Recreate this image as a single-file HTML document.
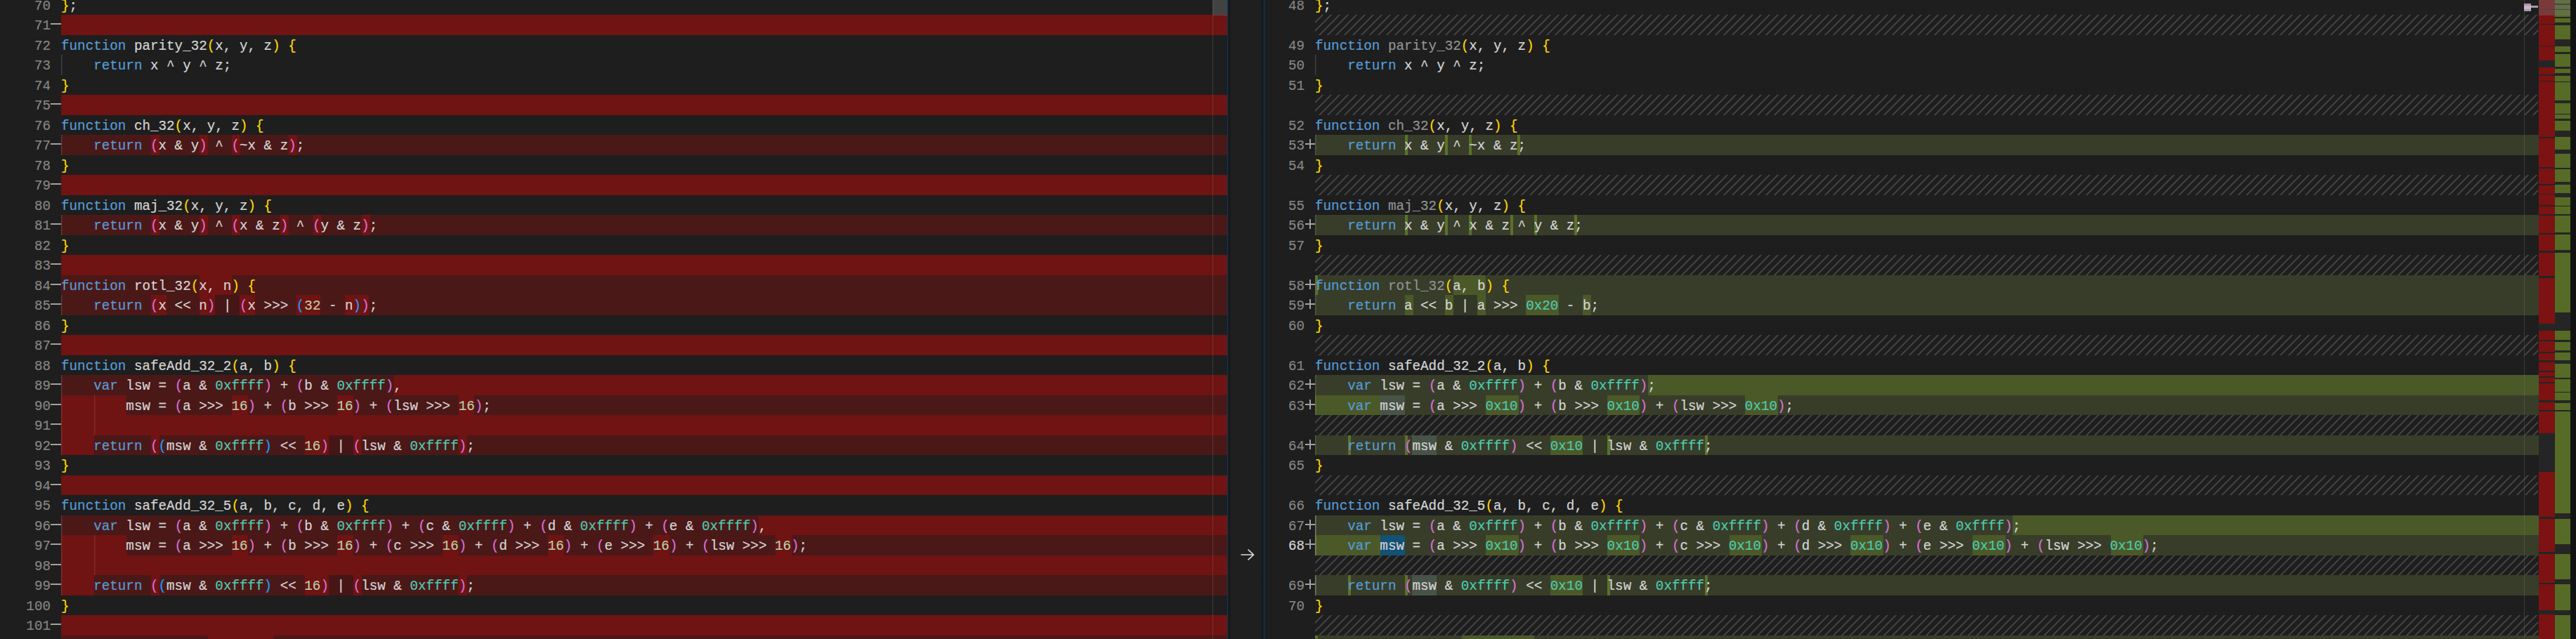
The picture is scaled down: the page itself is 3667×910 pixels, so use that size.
<!DOCTYPE html>
<html><head><meta charset="utf-8"><title>diff</title>
<style>
html,body{margin:0;padding:0;background:#1e1e1e;}
body{width:3667px;height:910px;overflow:hidden;position:relative;font-family:"Liberation Mono",monospace;}
div{position:absolute;box-sizing:border-box;}
.t,.ln{font-family:"Liberation Mono",monospace;font-size:19.245px;line-height:28.5px;height:28.5px;white-space:pre;color:#d4d4d4;-webkit-text-stroke:0.2px currentColor;transform:scaleY(1.05);transform-origin:0 21.3px;}
.ln{color:#858585;text-align:right;}
.ln.act{color:#d4d4d4;}
.k{color:#569cd6}.h{color:#4ec9b0}.n{color:#b5cea8}.b1{color:#ffd700}.b2{color:#da70d6}.b3{color:#179fff}.d{color:#929292}
.ga{background:#707070}.ga2{background:rgba(112,112,112,.45)}.g{background:#404040}.g2{background:rgba(64,64,64,.45)}
.dl{background:rgba(255,0,0,.2)}.dc{background:rgba(255,0,0,.2)}.dk{background:rgba(0,0,0,.06)}
.il{background:rgba(155,185,85,.2)}.ic{background:rgba(156,204,44,.2)}.ik{background:rgba(0,0,0,.08)}
.ib{background:#5b712a}
.wh{background:rgba(173,214,255,.15)}.sel{background:#125275;border-radius:3px}
.mi{background:#a2a2a2}
.hz{background-image:linear-gradient(-45deg,rgba(204,204,204,.2) 12.5%,transparent 12.5%,transparent 50%,rgba(204,204,204,.2) 50%,rgba(204,204,204,.2) 62.5%,transparent 62.5%,transparent 100%);background-size:12px 12px;}
.ovbg{background:#252525}.ovr{background:#7d1212}.ovg{background:#566b25}.ovs{background:rgba(121,121,121,.4)}.ove{background:#121212}
</style></head><body>
<div class="ln" style="left:0;top:-5px;width:72px">70</div>
<div class="t" style="left:87px;top:-5px"><span class="b1">}</span>;</div>
<div class="dl" style="left:87px;top:21px;width:1660px;height:29px"></div>
<div class="dc" style="left:87px;top:21px;width:1660px;height:29px"></div>
<div class="mi" style="left:72px;top:33px;width:15px;height:2px"></div>
<div class="ln" style="left:0;top:23px;width:72px">71</div>
<div class="ln" style="left:0;top:52px;width:72px">72</div>
<div class="t" style="left:87px;top:52px"><span class="k">function</span> parity_32<span class="b1">(</span>x, y, z<span class="b1">)</span> <span class="b1">{</span></div>
<div class="g" style="left:87px;top:78px;width:1px;height:29px"></div>
<div class="g2" style="left:88px;top:78px;width:1px;height:29px"></div>
<div class="ln" style="left:0;top:80px;width:72px">73</div>
<div class="t" style="left:87px;top:80px">    <span class="k">return</span> x ^ y ^ z;</div>
<div class="ln" style="left:0;top:109px;width:72px">74</div>
<div class="t" style="left:87px;top:109px"><span class="b1">}</span></div>
<div class="dl" style="left:87px;top:135px;width:1660px;height:29px"></div>
<div class="dc" style="left:87px;top:135px;width:1660px;height:29px"></div>
<div class="mi" style="left:72px;top:147px;width:15px;height:2px"></div>
<div class="ln" style="left:0;top:137px;width:72px">75</div>
<div class="ln" style="left:0;top:166px;width:72px">76</div>
<div class="t" style="left:87px;top:166px"><span class="k">function</span> ch_32<span class="b1">(</span>x, y, z<span class="b1">)</span> <span class="b1">{</span></div>
<div class="g" style="left:87px;top:192px;width:1px;height:29px"></div>
<div class="g2" style="left:88px;top:192px;width:1px;height:29px"></div>
<div class="dl" style="left:87px;top:192px;width:1660px;height:29px"></div>
<div class="dc" style="left:215px;top:192px;width:12px;height:29px"></div>
<div class="dc" style="left:284px;top:192px;width:12px;height:29px"></div>
<div class="dc" style="left:330px;top:192px;width:12px;height:29px"></div>
<div class="dc" style="left:411px;top:192px;width:12px;height:29px"></div>
<div class="mi" style="left:72px;top:204px;width:15px;height:2px"></div>
<div class="ln" style="left:0;top:194px;width:72px">77</div>
<div class="t" style="left:87px;top:194px">    <span class="k">return</span> <span class="b2">(</span>x &amp; y<span class="b2">)</span> ^ <span class="b2">(</span>~x &amp; z<span class="b2">)</span>;</div>
<div class="ln" style="left:0;top:223px;width:72px">78</div>
<div class="t" style="left:87px;top:223px"><span class="b1">}</span></div>
<div class="dl" style="left:87px;top:249px;width:1660px;height:29px"></div>
<div class="dc" style="left:87px;top:249px;width:1660px;height:29px"></div>
<div class="mi" style="left:72px;top:261px;width:15px;height:2px"></div>
<div class="ln" style="left:0;top:251px;width:72px">79</div>
<div class="ln" style="left:0;top:280px;width:72px">80</div>
<div class="t" style="left:87px;top:280px"><span class="k">function</span> maj_32<span class="b1">(</span>x, y, z<span class="b1">)</span> <span class="b1">{</span></div>
<div class="g" style="left:87px;top:306px;width:1px;height:29px"></div>
<div class="g2" style="left:88px;top:306px;width:1px;height:29px"></div>
<div class="dl" style="left:87px;top:306px;width:1660px;height:29px"></div>
<div class="dc" style="left:215px;top:306px;width:12px;height:29px"></div>
<div class="dc" style="left:284px;top:306px;width:12px;height:29px"></div>
<div class="dc" style="left:330px;top:306px;width:12px;height:29px"></div>
<div class="dc" style="left:399px;top:306px;width:12px;height:29px"></div>
<div class="dc" style="left:446px;top:306px;width:12px;height:29px"></div>
<div class="dc" style="left:515px;top:306px;width:12px;height:29px"></div>
<div class="mi" style="left:72px;top:318px;width:15px;height:2px"></div>
<div class="ln" style="left:0;top:308px;width:72px">81</div>
<div class="t" style="left:87px;top:308px">    <span class="k">return</span> <span class="b2">(</span>x &amp; y<span class="b2">)</span> ^ <span class="b2">(</span>x &amp; z<span class="b2">)</span> ^ <span class="b2">(</span>y &amp; z<span class="b2">)</span>;</div>
<div class="ln" style="left:0;top:337px;width:72px">82</div>
<div class="t" style="left:87px;top:337px"><span class="b1">}</span></div>
<div class="dl" style="left:87px;top:363px;width:1660px;height:29px"></div>
<div class="dc" style="left:87px;top:363px;width:1660px;height:29px"></div>
<div class="mi" style="left:72px;top:375px;width:15px;height:2px"></div>
<div class="ln" style="left:0;top:365px;width:72px">83</div>
<div class="dl" style="left:87px;top:392px;width:1660px;height:28px"></div>
<div class="dc" style="left:284px;top:392px;width:46px;height:28px"></div>
<div class="mi" style="left:72px;top:404px;width:15px;height:2px"></div>
<div class="ln" style="left:0;top:394px;width:72px">84</div>
<div class="t" style="left:87px;top:394px"><span class="k">function</span> rotl_32<span class="b1">(</span>x, n<span class="b1">)</span> <span class="b1">{</span></div>
<div class="g" style="left:87px;top:420px;width:1px;height:29px"></div>
<div class="g2" style="left:88px;top:420px;width:1px;height:29px"></div>
<div class="dl" style="left:87px;top:420px;width:1660px;height:29px"></div>
<div class="dc" style="left:215px;top:420px;width:22px;height:29px"></div>
<div class="dc" style="left:284px;top:420px;width:22px;height:29px"></div>
<div class="dc" style="left:341px;top:420px;width:22px;height:29px"></div>
<div class="dc" style="left:422px;top:420px;width:34px;height:29px"></div>
<div class="dc" style="left:491px;top:420px;width:34px;height:29px"></div>
<div class="dk" style="left:306px;top:420px;width:35px;height:29px"></div>
<div class="mi" style="left:72px;top:432px;width:15px;height:2px"></div>
<div class="ln" style="left:0;top:422px;width:72px">85</div>
<div class="t" style="left:87px;top:422px">    <span class="k">return</span> <span class="b2">(</span>x &lt;&lt; n<span class="b2">)</span> | <span class="b2">(</span>x &gt;&gt;&gt; <span class="b3">(</span><span class="n">32</span> - n<span class="b3">)</span><span class="b2">)</span>;</div>
<div class="ln" style="left:0;top:451px;width:72px">86</div>
<div class="t" style="left:87px;top:451px"><span class="b1">}</span></div>
<div class="dl" style="left:87px;top:477px;width:1660px;height:29px"></div>
<div class="dc" style="left:87px;top:477px;width:1660px;height:29px"></div>
<div class="mi" style="left:72px;top:489px;width:15px;height:2px"></div>
<div class="ln" style="left:0;top:479px;width:72px">87</div>
<div class="ln" style="left:0;top:508px;width:72px">88</div>
<div class="t" style="left:87px;top:508px"><span class="k">function</span> safeAdd_32_2<span class="b1">(</span>a, b<span class="b1">)</span> <span class="b1">{</span></div>
<div class="g" style="left:87px;top:534px;width:1px;height:29px"></div>
<div class="g2" style="left:88px;top:534px;width:1px;height:29px"></div>
<div class="dl" style="left:87px;top:534px;width:1660px;height:29px"></div>
<div class="dc" style="left:561px;top:534px;width:1186px;height:29px"></div>
<div class="mi" style="left:72px;top:546px;width:15px;height:2px"></div>
<div class="ln" style="left:0;top:536px;width:72px">89</div>
<div class="t" style="left:87px;top:536px">    <span class="k">var</span> lsw = <span class="b2">(</span>a &amp; <span class="h">0xffff</span><span class="b2">)</span> + <span class="b2">(</span>b &amp; <span class="h">0xffff</span><span class="b2">)</span>,</div>
<div class="g" style="left:87px;top:563px;width:1px;height:28px"></div>
<div class="g2" style="left:88px;top:563px;width:1px;height:28px"></div>
<div class="g" style="left:134px;top:563px;width:1px;height:28px"></div>
<div class="g2" style="left:135px;top:563px;width:1px;height:28px"></div>
<div class="dl" style="left:87px;top:563px;width:1660px;height:28px"></div>
<div class="dc" style="left:87px;top:563px;width:93px;height:28px"></div>
<div class="dc" style="left:330px;top:563px;width:23px;height:28px"></div>
<div class="dc" style="left:480px;top:563px;width:23px;height:28px"></div>
<div class="dc" style="left:653px;top:563px;width:22px;height:28px"></div>
<div class="mi" style="left:72px;top:575px;width:15px;height:2px"></div>
<div class="ln" style="left:0;top:565px;width:72px">90</div>
<div class="t" style="left:87px;top:565px">        msw = <span class="b2">(</span>a &gt;&gt;&gt; <span class="n">16</span><span class="b2">)</span> + <span class="b2">(</span>b &gt;&gt;&gt; <span class="n">16</span><span class="b2">)</span> + <span class="b2">(</span>lsw &gt;&gt;&gt; <span class="n">16</span><span class="b2">)</span>;</div>
<div class="g" style="left:87px;top:591px;width:1px;height:29px"></div>
<div class="g2" style="left:88px;top:591px;width:1px;height:29px"></div>
<div class="g" style="left:134px;top:591px;width:1px;height:29px"></div>
<div class="g2" style="left:135px;top:591px;width:1px;height:29px"></div>
<div class="dl" style="left:87px;top:591px;width:1660px;height:29px"></div>
<div class="dc" style="left:87px;top:591px;width:1660px;height:29px"></div>
<div class="mi" style="left:72px;top:603px;width:15px;height:2px"></div>
<div class="ln" style="left:0;top:593px;width:72px">91</div>
<div class="g" style="left:87px;top:620px;width:1px;height:28px"></div>
<div class="g2" style="left:88px;top:620px;width:1px;height:28px"></div>
<div class="dl" style="left:87px;top:620px;width:1660px;height:28px"></div>
<div class="dc" style="left:87px;top:620px;width:47px;height:28px"></div>
<div class="dc" style="left:215px;top:620px;width:12px;height:28px"></div>
<div class="dc" style="left:434px;top:620px;width:34px;height:28px"></div>
<div class="dc" style="left:503px;top:620px;width:12px;height:28px"></div>
<div class="dc" style="left:653px;top:620px;width:12px;height:28px"></div>
<div class="dk" style="left:468px;top:620px;width:35px;height:28px"></div>
<div class="mi" style="left:72px;top:632px;width:15px;height:2px"></div>
<div class="ln" style="left:0;top:622px;width:72px">92</div>
<div class="t" style="left:87px;top:622px">    <span class="k">return</span> <span class="b2">(</span><span class="b3">(</span>msw &amp; <span class="h">0xffff</span><span class="b3">)</span> &lt;&lt; <span class="n">16</span><span class="b2">)</span> | <span class="b2">(</span>lsw &amp; <span class="h">0xffff</span><span class="b2">)</span>;</div>
<div class="ln" style="left:0;top:650px;width:72px">93</div>
<div class="t" style="left:87px;top:650px"><span class="b1">}</span></div>
<div class="dl" style="left:87px;top:677px;width:1660px;height:28px"></div>
<div class="dc" style="left:87px;top:677px;width:1660px;height:28px"></div>
<div class="mi" style="left:72px;top:689px;width:15px;height:2px"></div>
<div class="ln" style="left:0;top:679px;width:72px">94</div>
<div class="ln" style="left:0;top:707px;width:72px">95</div>
<div class="t" style="left:87px;top:707px"><span class="k">function</span> safeAdd_32_5<span class="b1">(</span>a, b, c, d, e<span class="b1">)</span> <span class="b1">{</span></div>
<div class="g" style="left:87px;top:734px;width:1px;height:28px"></div>
<div class="g2" style="left:88px;top:734px;width:1px;height:28px"></div>
<div class="dl" style="left:87px;top:734px;width:1660px;height:28px"></div>
<div class="dc" style="left:1080px;top:734px;width:667px;height:28px"></div>
<div class="mi" style="left:72px;top:746px;width:15px;height:2px"></div>
<div class="ln" style="left:0;top:736px;width:72px">96</div>
<div class="t" style="left:87px;top:736px">    <span class="k">var</span> lsw = <span class="b2">(</span>a &amp; <span class="h">0xffff</span><span class="b2">)</span> + <span class="b2">(</span>b &amp; <span class="h">0xffff</span><span class="b2">)</span> + <span class="b2">(</span>c &amp; <span class="h">0xffff</span><span class="b2">)</span> + <span class="b2">(</span>d &amp; <span class="h">0xffff</span><span class="b2">)</span> + <span class="b2">(</span>e &amp; <span class="h">0xffff</span><span class="b2">)</span>,</div>
<div class="g" style="left:87px;top:762px;width:1px;height:29px"></div>
<div class="g2" style="left:88px;top:762px;width:1px;height:29px"></div>
<div class="g" style="left:134px;top:762px;width:1px;height:29px"></div>
<div class="g2" style="left:135px;top:762px;width:1px;height:29px"></div>
<div class="dl" style="left:87px;top:762px;width:1660px;height:29px"></div>
<div class="dc" style="left:87px;top:762px;width:93px;height:29px"></div>
<div class="dc" style="left:330px;top:762px;width:23px;height:29px"></div>
<div class="dc" style="left:480px;top:762px;width:23px;height:29px"></div>
<div class="dc" style="left:630px;top:762px;width:23px;height:29px"></div>
<div class="dc" style="left:780px;top:762px;width:23px;height:29px"></div>
<div class="dc" style="left:930px;top:762px;width:23px;height:29px"></div>
<div class="dc" style="left:1104px;top:762px;width:23px;height:29px"></div>
<div class="mi" style="left:72px;top:774px;width:15px;height:2px"></div>
<div class="ln" style="left:0;top:764px;width:72px">97</div>
<div class="t" style="left:87px;top:764px">        msw = <span class="b2">(</span>a &gt;&gt;&gt; <span class="n">16</span><span class="b2">)</span> + <span class="b2">(</span>b &gt;&gt;&gt; <span class="n">16</span><span class="b2">)</span> + <span class="b2">(</span>c &gt;&gt;&gt; <span class="n">16</span><span class="b2">)</span> + <span class="b2">(</span>d &gt;&gt;&gt; <span class="n">16</span><span class="b2">)</span> + <span class="b2">(</span>e &gt;&gt;&gt; <span class="n">16</span><span class="b2">)</span> + <span class="b2">(</span>lsw &gt;&gt;&gt; <span class="n">16</span><span class="b2">)</span>;</div>
<div class="g" style="left:87px;top:791px;width:1px;height:28px"></div>
<div class="g2" style="left:88px;top:791px;width:1px;height:28px"></div>
<div class="g" style="left:134px;top:791px;width:1px;height:28px"></div>
<div class="g2" style="left:135px;top:791px;width:1px;height:28px"></div>
<div class="dl" style="left:87px;top:791px;width:1660px;height:28px"></div>
<div class="dc" style="left:87px;top:791px;width:1660px;height:28px"></div>
<div class="mi" style="left:72px;top:803px;width:15px;height:2px"></div>
<div class="ln" style="left:0;top:793px;width:72px">98</div>
<div class="g" style="left:87px;top:819px;width:1px;height:29px"></div>
<div class="g2" style="left:88px;top:819px;width:1px;height:29px"></div>
<div class="dl" style="left:87px;top:819px;width:1660px;height:29px"></div>
<div class="dc" style="left:87px;top:819px;width:47px;height:29px"></div>
<div class="dc" style="left:215px;top:819px;width:12px;height:29px"></div>
<div class="dc" style="left:434px;top:819px;width:34px;height:29px"></div>
<div class="dc" style="left:503px;top:819px;width:12px;height:29px"></div>
<div class="dc" style="left:653px;top:819px;width:12px;height:29px"></div>
<div class="dk" style="left:468px;top:819px;width:35px;height:29px"></div>
<div class="mi" style="left:72px;top:831px;width:15px;height:2px"></div>
<div class="ln" style="left:0;top:821px;width:72px">99</div>
<div class="t" style="left:87px;top:821px">    <span class="k">return</span> <span class="b2">(</span><span class="b3">(</span>msw &amp; <span class="h">0xffff</span><span class="b3">)</span> &lt;&lt; <span class="n">16</span><span class="b2">)</span> | <span class="b2">(</span>lsw &amp; <span class="h">0xffff</span><span class="b2">)</span>;</div>
<div class="ln" style="left:0;top:850px;width:72px">100</div>
<div class="t" style="left:87px;top:850px"><span class="b1">}</span></div>
<div class="dl" style="left:87px;top:876px;width:1660px;height:29px"></div>
<div class="dc" style="left:87px;top:876px;width:1660px;height:29px"></div>
<div class="mi" style="left:72px;top:888px;width:15px;height:2px"></div>
<div class="ln" style="left:0;top:878px;width:72px">101</div>
<div class="dl" style="left:87px;top:905px;width:1660px;height:28px"></div>
<div class="dc" style="left:296px;top:905px;width:93px;height:28px"></div>
<div class="mi" style="left:72px;top:917px;width:15px;height:2px"></div>
<div class="ln" style="left:0;top:907px;width:72px">102</div>
<div class="ln" style="left:1800px;top:-5px;width:57px">48</div>
<div class="t" style="left:1872px;top:-5px"><span class="b1">}</span>;</div>
<div class="hz" style="left:1872px;top:21px;width:1741px;height:29px"></div>
<div class="ln" style="left:1800px;top:52px;width:57px">49</div>
<div class="t" style="left:1872px;top:52px"><span class="k">function</span> <span class="d">parity_32</span><span class="b1">(</span>x, y, z<span class="b1">)</span> <span class="b1">{</span></div>
<div class="g" style="left:1872px;top:78px;width:1px;height:29px"></div>
<div class="g2" style="left:1873px;top:78px;width:1px;height:29px"></div>
<div class="ln" style="left:1800px;top:80px;width:57px">50</div>
<div class="t" style="left:1872px;top:80px">    <span class="k">return</span> x ^ y ^ z;</div>
<div class="ln" style="left:1800px;top:109px;width:57px">51</div>
<div class="t" style="left:1872px;top:109px"><span class="b1">}</span></div>
<div class="hz" style="left:1872px;top:135px;width:1741px;height:29px"></div>
<div class="ln" style="left:1800px;top:166px;width:57px">52</div>
<div class="t" style="left:1872px;top:166px"><span class="k">function</span> <span class="d">ch_32</span><span class="b1">(</span>x, y, z<span class="b1">)</span> <span class="b1">{</span></div>
<div class="g" style="left:1872px;top:192px;width:1px;height:29px"></div>
<div class="g2" style="left:1873px;top:192px;width:1px;height:29px"></div>
<div class="il" style="left:1872px;top:192px;width:1742px;height:29px"></div>
<div class="ib" style="left:2000px;top:192px;width:4px;height:29px"></div>
<div class="ib" style="left:2057px;top:192px;width:4px;height:29px"></div>
<div class="ib" style="left:2091px;top:192px;width:4px;height:29px"></div>
<div class="ib" style="left:2160px;top:192px;width:4px;height:29px"></div>
<div class="mi" style="left:1858px;top:204px;width:14px;height:2px"></div>
<div class="mi" style="left:1864px;top:198px;width:2px;height:14px"></div>
<div class="ln" style="left:1800px;top:194px;width:57px">53</div>
<div class="t" style="left:1872px;top:194px">    <span class="k">return</span> x &amp; y ^ ~x &amp; z;</div>
<div class="ln" style="left:1800px;top:223px;width:57px">54</div>
<div class="t" style="left:1872px;top:223px"><span class="b1">}</span></div>
<div class="hz" style="left:1872px;top:249px;width:1741px;height:29px"></div>
<div class="ln" style="left:1800px;top:280px;width:57px">55</div>
<div class="t" style="left:1872px;top:280px"><span class="k">function</span> <span class="d">maj_32</span><span class="b1">(</span>x, y, z<span class="b1">)</span> <span class="b1">{</span></div>
<div class="g" style="left:1872px;top:306px;width:1px;height:29px"></div>
<div class="g2" style="left:1873px;top:306px;width:1px;height:29px"></div>
<div class="il" style="left:1872px;top:306px;width:1742px;height:29px"></div>
<div class="ib" style="left:2000px;top:306px;width:4px;height:29px"></div>
<div class="ib" style="left:2057px;top:306px;width:4px;height:29px"></div>
<div class="ib" style="left:2091px;top:306px;width:4px;height:29px"></div>
<div class="ib" style="left:2150px;top:306px;width:4px;height:29px"></div>
<div class="ib" style="left:2184px;top:306px;width:4px;height:29px"></div>
<div class="ib" style="left:2241px;top:306px;width:4px;height:29px"></div>
<div class="mi" style="left:1858px;top:318px;width:14px;height:2px"></div>
<div class="mi" style="left:1864px;top:312px;width:2px;height:14px"></div>
<div class="ln" style="left:1800px;top:308px;width:57px">56</div>
<div class="t" style="left:1872px;top:308px">    <span class="k">return</span> x &amp; y ^ x &amp; z ^ y &amp; z;</div>
<div class="ln" style="left:1800px;top:337px;width:57px">57</div>
<div class="t" style="left:1872px;top:337px"><span class="b1">}</span></div>
<div class="hz" style="left:1872px;top:363px;width:1741px;height:29px"></div>
<div class="il" style="left:1872px;top:392px;width:1742px;height:28px"></div>
<div class="ic" style="left:2069px;top:392px;width:46px;height:28px"></div>
<div class="ib" style="left:1872px;top:392px;width:4px;height:28px"></div>
<div class="mi" style="left:1858px;top:404px;width:14px;height:2px"></div>
<div class="mi" style="left:1864px;top:398px;width:2px;height:14px"></div>
<div class="ln" style="left:1800px;top:394px;width:57px">58</div>
<div class="t" style="left:1872px;top:394px"><span class="k">function</span> <span class="d">rotl_32</span><span class="b1">(</span>a, b<span class="b1">)</span> <span class="b1">{</span></div>
<div class="g" style="left:1872px;top:420px;width:1px;height:29px"></div>
<div class="g2" style="left:1873px;top:420px;width:1px;height:29px"></div>
<div class="il" style="left:1872px;top:420px;width:1742px;height:29px"></div>
<div class="ic" style="left:2000px;top:420px;width:12px;height:29px"></div>
<div class="ic" style="left:2057px;top:420px;width:12px;height:29px"></div>
<div class="ic" style="left:2103px;top:420px;width:12px;height:29px"></div>
<div class="ic" style="left:2172px;top:420px;width:47px;height:29px"></div>
<div class="ic" style="left:2253px;top:420px;width:12px;height:29px"></div>
<div class="ik" style="left:2069px;top:420px;width:34px;height:29px"></div>
<div class="mi" style="left:1858px;top:432px;width:14px;height:2px"></div>
<div class="mi" style="left:1864px;top:426px;width:2px;height:14px"></div>
<div class="ln" style="left:1800px;top:422px;width:57px">59</div>
<div class="t" style="left:1872px;top:422px">    <span class="k">return</span> a &lt;&lt; b | a &gt;&gt;&gt; <span class="h">0x20</span> - b;</div>
<div class="ln" style="left:1800px;top:451px;width:57px">60</div>
<div class="t" style="left:1872px;top:451px"><span class="b1">}</span></div>
<div class="hz" style="left:1872px;top:477px;width:1741px;height:29px"></div>
<div class="ln" style="left:1800px;top:508px;width:57px">61</div>
<div class="t" style="left:1872px;top:508px"><span class="k">function</span> safeAdd_32_2<span class="b1">(</span>a, b<span class="b1">)</span> <span class="b1">{</span></div>
<div class="g" style="left:1872px;top:534px;width:1px;height:29px"></div>
<div class="g2" style="left:1873px;top:534px;width:1px;height:29px"></div>
<div class="il" style="left:1872px;top:534px;width:1742px;height:29px"></div>
<div class="ic" style="left:2346px;top:534px;width:1268px;height:29px"></div>
<div class="mi" style="left:1858px;top:546px;width:14px;height:2px"></div>
<div class="mi" style="left:1864px;top:540px;width:2px;height:14px"></div>
<div class="ln" style="left:1800px;top:536px;width:57px">62</div>
<div class="t" style="left:1872px;top:536px">    <span class="k">var</span> lsw = <span class="b2">(</span>a &amp; <span class="h">0xffff</span><span class="b2">)</span> + <span class="b2">(</span>b &amp; <span class="h">0xffff</span><span class="b2">)</span>;</div>
<div class="g" style="left:1872px;top:563px;width:1px;height:28px"></div>
<div class="g2" style="left:1873px;top:563px;width:1px;height:28px"></div>
<div class="il" style="left:1872px;top:563px;width:1742px;height:28px"></div>
<div class="ic" style="left:1872px;top:563px;width:93px;height:28px"></div>
<div class="ic" style="left:2115px;top:563px;width:47px;height:28px"></div>
<div class="ic" style="left:2288px;top:563px;width:46px;height:28px"></div>
<div class="ic" style="left:2484px;top:563px;width:47px;height:28px"></div>
<div class="wh" style="left:1965px;top:563px;width:35px;height:28px"></div>
<div class="mi" style="left:1858px;top:575px;width:14px;height:2px"></div>
<div class="mi" style="left:1864px;top:569px;width:2px;height:14px"></div>
<div class="ln" style="left:1800px;top:565px;width:57px">63</div>
<div class="t" style="left:1872px;top:565px">    <span class="k">var</span> msw = <span class="b2">(</span>a &gt;&gt;&gt; <span class="h">0x10</span><span class="b2">)</span> + <span class="b2">(</span>b &gt;&gt;&gt; <span class="h">0x10</span><span class="b2">)</span> + <span class="b2">(</span>lsw &gt;&gt;&gt; <span class="h">0x10</span><span class="b2">)</span>;</div>
<div class="hz" style="left:1872px;top:591px;width:1741px;height:29px"></div>
<div class="g" style="left:1872px;top:620px;width:1px;height:28px"></div>
<div class="g2" style="left:1873px;top:620px;width:1px;height:28px"></div>
<div class="il" style="left:1872px;top:620px;width:1742px;height:28px"></div>
<div class="ic" style="left:2207px;top:620px;width:46px;height:28px"></div>
<div class="ik" style="left:2253px;top:620px;width:35px;height:28px"></div>
<div class="ib" style="left:1919px;top:620px;width:4px;height:28px"></div>
<div class="ib" style="left:2000px;top:620px;width:4px;height:28px"></div>
<div class="ib" style="left:2288px;top:620px;width:4px;height:28px"></div>
<div class="ib" style="left:2427px;top:620px;width:4px;height:28px"></div>
<div class="wh" style="left:2010px;top:620px;width:35px;height:28px"></div>
<div class="mi" style="left:1858px;top:632px;width:14px;height:2px"></div>
<div class="mi" style="left:1864px;top:626px;width:2px;height:14px"></div>
<div class="ln" style="left:1800px;top:622px;width:57px">64</div>
<div class="t" style="left:1872px;top:622px">    <span class="k">return</span> <span class="b2">(</span>msw &amp; <span class="h">0xffff</span><span class="b2">)</span> &lt;&lt; <span class="h">0x10</span> | lsw &amp; <span class="h">0xffff</span>;</div>
<div class="ln" style="left:1800px;top:650px;width:57px">65</div>
<div class="t" style="left:1872px;top:650px"><span class="b1">}</span></div>
<div class="hz" style="left:1872px;top:677px;width:1741px;height:28px"></div>
<div class="ln" style="left:1800px;top:707px;width:57px">66</div>
<div class="t" style="left:1872px;top:707px"><span class="k">function</span> safeAdd_32_5<span class="b1">(</span>a, b, c, d, e<span class="b1">)</span> <span class="b1">{</span></div>
<div class="ga" style="left:1872px;top:734px;width:1px;height:28px"></div>
<div class="ga2" style="left:1873px;top:734px;width:1px;height:28px"></div>
<div class="il" style="left:1872px;top:734px;width:1742px;height:28px"></div>
<div class="ic" style="left:2865px;top:734px;width:749px;height:28px"></div>
<div class="mi" style="left:1858px;top:746px;width:14px;height:2px"></div>
<div class="mi" style="left:1864px;top:740px;width:2px;height:14px"></div>
<div class="ln" style="left:1800px;top:736px;width:57px">67</div>
<div class="t" style="left:1872px;top:736px">    <span class="k">var</span> lsw = <span class="b2">(</span>a &amp; <span class="h">0xffff</span><span class="b2">)</span> + <span class="b2">(</span>b &amp; <span class="h">0xffff</span><span class="b2">)</span> + <span class="b2">(</span>c &amp; <span class="h">0xffff</span><span class="b2">)</span> + <span class="b2">(</span>d &amp; <span class="h">0xffff</span><span class="b2">)</span> + <span class="b2">(</span>e &amp; <span class="h">0xffff</span><span class="b2">)</span>;</div>
<div class="ga" style="left:1872px;top:762px;width:1px;height:29px"></div>
<div class="ga2" style="left:1873px;top:762px;width:1px;height:29px"></div>
<div class="il" style="left:1872px;top:762px;width:1742px;height:29px"></div>
<div class="ic" style="left:1872px;top:762px;width:93px;height:29px"></div>
<div class="ic" style="left:2115px;top:762px;width:47px;height:29px"></div>
<div class="ic" style="left:2288px;top:762px;width:46px;height:29px"></div>
<div class="ic" style="left:2462px;top:762px;width:46px;height:29px"></div>
<div class="ic" style="left:2634px;top:762px;width:47px;height:29px"></div>
<div class="ic" style="left:2808px;top:762px;width:47px;height:29px"></div>
<div class="ic" style="left:3005px;top:762px;width:46px;height:29px"></div>
<div class="sel" style="left:1965px;top:762px;width:35px;height:29px"></div>
<div class="mi" style="left:1858px;top:774px;width:14px;height:2px"></div>
<div class="mi" style="left:1864px;top:768px;width:2px;height:14px"></div>
<div class="ln act" style="left:1800px;top:764px;width:57px">68</div>
<div class="t" style="left:1872px;top:764px">    <span class="k">var</span> msw = <span class="b2">(</span>a &gt;&gt;&gt; <span class="h">0x10</span><span class="b2">)</span> + <span class="b2">(</span>b &gt;&gt;&gt; <span class="h">0x10</span><span class="b2">)</span> + <span class="b2">(</span>c &gt;&gt;&gt; <span class="h">0x10</span><span class="b2">)</span> + <span class="b2">(</span>d &gt;&gt;&gt; <span class="h">0x10</span><span class="b2">)</span> + <span class="b2">(</span>e &gt;&gt;&gt; <span class="h">0x10</span><span class="b2">)</span> + <span class="b2">(</span>lsw &gt;&gt;&gt; <span class="h">0x10</span><span class="b2">)</span>;</div>
<div class="hz" style="left:1872px;top:791px;width:1741px;height:28px"></div>
<div class="ga" style="left:1872px;top:819px;width:1px;height:29px"></div>
<div class="ga2" style="left:1873px;top:819px;width:1px;height:29px"></div>
<div class="il" style="left:1872px;top:819px;width:1742px;height:29px"></div>
<div class="ic" style="left:2207px;top:819px;width:46px;height:29px"></div>
<div class="ik" style="left:2253px;top:819px;width:35px;height:29px"></div>
<div class="ib" style="left:1919px;top:819px;width:4px;height:29px"></div>
<div class="ib" style="left:2000px;top:819px;width:4px;height:29px"></div>
<div class="ib" style="left:2288px;top:819px;width:4px;height:29px"></div>
<div class="ib" style="left:2427px;top:819px;width:4px;height:29px"></div>
<div class="wh" style="left:2010px;top:819px;width:35px;height:29px"></div>
<div class="mi" style="left:1858px;top:831px;width:14px;height:2px"></div>
<div class="mi" style="left:1864px;top:825px;width:2px;height:14px"></div>
<div class="ln" style="left:1800px;top:821px;width:57px">69</div>
<div class="t" style="left:1872px;top:821px">    <span class="k">return</span> <span class="b2">(</span>msw &amp; <span class="h">0xffff</span><span class="b2">)</span> &lt;&lt; <span class="h">0x10</span> | lsw &amp; <span class="h">0xffff</span>;</div>
<div class="ln" style="left:1800px;top:850px;width:57px">70</div>
<div class="t" style="left:1872px;top:850px"><span class="b1">}</span></div>
<div class="hz" style="left:1872px;top:876px;width:1741px;height:29px"></div>
<div class="il" style="left:1872px;top:905px;width:1742px;height:28px"></div>
<div class="ic" style="left:2081px;top:905px;width:103px;height:28px"></div>
<div class="ib" style="left:1872px;top:905px;width:4px;height:28px"></div>
<div class="mi" style="left:1858px;top:917px;width:14px;height:2px"></div>
<div class="mi" style="left:1864px;top:911px;width:2px;height:14px"></div>
<!-- left scrollbar -->
<div style="left:1726px;top:0;width:1px;height:910px;background:rgba(127,127,127,.3)"></div>
<div style="left:1726px;top:0;width:21px;height:22px;background:rgba(121,121,121,.4)"></div>
<!-- gutter -->
<div style="left:1748px;top:0;width:51px;height:910px;background:linear-gradient(90deg,#141414 0,#1f1f1f 5px,#1f1f1f 46px,#141414 51px)"></div>
<div style="left:1747px;top:0;width:1px;height:910px;background:#0a3756"></div>
<div style="left:1748px;top:0;width:1px;height:910px;background:rgba(10,55,86,.4)"></div>
<div style="left:1799px;top:0;width:1px;height:910px;background:#0a3756"></div>
<div style="left:1798px;top:0;width:1px;height:910px;background:rgba(10,55,86,.35)"></div>
<div style="left:1800px;top:0;width:1px;height:910px;background:rgba(10,55,86,.25)"></div>
<svg style="position:absolute;left:1762px;top:778px" width="28" height="24" viewBox="0 0 28 24"><path d="M4.5 12H22.5M14.5 4.5L22.5 12L14.5 19.5" stroke="#dcdcdc" stroke-width="1.6" fill="none" stroke-linecap="butt" stroke-linejoin="miter"/></svg>
<!-- right scrollbar -->
<div style="left:3593px;top:0;width:1px;height:910px;background:rgba(127,127,127,.3)"></div>
<div style="left:3593px;top:5px;width:10px;height:4px;background:#b58cb5"></div>
<div style="left:3593px;top:8px;width:10px;height:5px;background:#c9b3c9"></div>
<div style="left:3593px;top:13px;width:10px;height:3px;background:#a0a0a0"></div>
<div style="left:3603px;top:8px;width:10px;height:3px;background:#a0a0a0"></div>
<div class="ovbg" style="left:3614px;top:0px;width:45px;height:910px"></div>
<div class="ovr" style="left:3614px;top:0px;width:23px;height:13px"></div>
<div class="ovr" style="left:3614px;top:14px;width:23px;height:20px"></div>
<div class="ovr" style="left:3614px;top:35px;width:23px;height:30px"></div>
<div class="ovr" style="left:3614px;top:66px;width:23px;height:20px"></div>
<div class="ovr" style="left:3614px;top:96px;width:23px;height:10px"></div>
<div class="ovr" style="left:3614px;top:108px;width:23px;height:7px"></div>
<div class="ovr" style="left:3614px;top:116px;width:23px;height:79px"></div>
<div class="ovr" style="left:3614px;top:197px;width:23px;height:41px"></div>
<div class="ovr" style="left:3614px;top:240px;width:23px;height:22px"></div>
<div class="ovr" style="left:3614px;top:264px;width:23px;height:12px"></div>
<div class="ovr" style="left:3614px;top:277px;width:23px;height:15px"></div>
<div class="ovr" style="left:3614px;top:294px;width:23px;height:11px"></div>
<div class="ovr" style="left:3614px;top:307px;width:23px;height:25px"></div>
<div class="ovr" style="left:3614px;top:334px;width:23px;height:23px"></div>
<div class="ovr" style="left:3614px;top:360px;width:23px;height:33px"></div>
<div class="ovr" style="left:3614px;top:396px;width:23px;height:65px"></div>
<div class="ovr" style="left:3614px;top:471px;width:23px;height:13px"></div>
<div class="ovr" style="left:3614px;top:486px;width:23px;height:15px"></div>
<div class="ovr" style="left:3614px;top:503px;width:23px;height:10px"></div>
<div class="ovr" style="left:3614px;top:516px;width:23px;height:12px"></div>
<div class="ovr" style="left:3614px;top:530px;width:23px;height:6px"></div>
<div class="ovr" style="left:3614px;top:538px;width:23px;height:6px"></div>
<div class="ovr" style="left:3614px;top:546px;width:23px;height:24px"></div>
<div class="ovr" style="left:3614px;top:573px;width:23px;height:11px"></div>
<div class="ovr" style="left:3614px;top:586px;width:23px;height:31px"></div>
<div class="ovr" style="left:3614px;top:672px;width:23px;height:64px"></div>
<div class="ovr" style="left:3614px;top:739px;width:23px;height:47px"></div>
<div class="ovr" style="left:3614px;top:789px;width:23px;height:41px"></div>
<div class="ovr" style="left:3614px;top:832px;width:23px;height:37px"></div>
<div class="ovr" style="left:3614px;top:875px;width:23px;height:35px"></div>
<div class="ovg" style="left:3637px;top:0px;width:22px;height:5px"></div>
<div class="ovg" style="left:3637px;top:7px;width:22px;height:6px"></div>
<div class="ovg" style="left:3637px;top:14px;width:22px;height:10px"></div>
<div class="ovg" style="left:3637px;top:26px;width:22px;height:6px"></div>
<div class="ovg" style="left:3637px;top:36px;width:22px;height:20px"></div>
<div class="ovg" style="left:3637px;top:66px;width:22px;height:8px"></div>
<div class="ovg" style="left:3637px;top:77px;width:22px;height:18px"></div>
<div class="ovg" style="left:3637px;top:98px;width:22px;height:6px"></div>
<div class="ovg" style="left:3637px;top:108px;width:22px;height:8px"></div>
<div class="ovg" style="left:3637px;top:117px;width:22px;height:26px"></div>
<div class="ovg" style="left:3637px;top:147px;width:22px;height:15px"></div>
<div class="ovg" style="left:3637px;top:163px;width:22px;height:6px"></div>
<div class="ovg" style="left:3637px;top:172px;width:22px;height:14px"></div>
<div class="ovg" style="left:3637px;top:195px;width:22px;height:18px"></div>
<div class="ovg" style="left:3637px;top:219px;width:22px;height:20px"></div>
<div class="ovg" style="left:3637px;top:241px;width:22px;height:18px"></div>
<div class="ovg" style="left:3637px;top:263px;width:22px;height:12px"></div>
<div class="ovg" style="left:3637px;top:281px;width:22px;height:12px"></div>
<div class="ovg" style="left:3637px;top:294px;width:22px;height:11px"></div>
<div class="ovg" style="left:3637px;top:307px;width:22px;height:24px"></div>
<div class="ovg" style="left:3637px;top:334px;width:22px;height:22px"></div>
<div class="ovg" style="left:3637px;top:360px;width:22px;height:85px"></div>
<div class="ovg" style="left:3637px;top:471px;width:22px;height:13px"></div>
<div class="ovg" style="left:3637px;top:487px;width:22px;height:12px"></div>
<div class="ovg" style="left:3637px;top:502px;width:22px;height:11px"></div>
<div class="ovg" style="left:3637px;top:518px;width:22px;height:20px"></div>
<div class="ovg" style="left:3637px;top:540px;width:22px;height:18px"></div>
<div class="ovg" style="left:3637px;top:559px;width:22px;height:11px"></div>
<div class="ovg" style="left:3637px;top:574px;width:22px;height:10px"></div>
<div class="ovg" style="left:3637px;top:586px;width:22px;height:145px"></div>
<div class="ovg" style="left:3637px;top:739px;width:22px;height:36px"></div>
<div class="ovg" style="left:3637px;top:789px;width:22px;height:36px"></div>
<div class="ovg" style="left:3637px;top:832px;width:22px;height:37px"></div>
<div class="ovg" style="left:3637px;top:876px;width:22px;height:34px"></div>
<div class="ovs" style="left:3614px;top:0px;width:45px;height:22px"></div>
<div class="ove" style="left:3659px;top:0px;width:8px;height:910px"></div>
</body></html>
